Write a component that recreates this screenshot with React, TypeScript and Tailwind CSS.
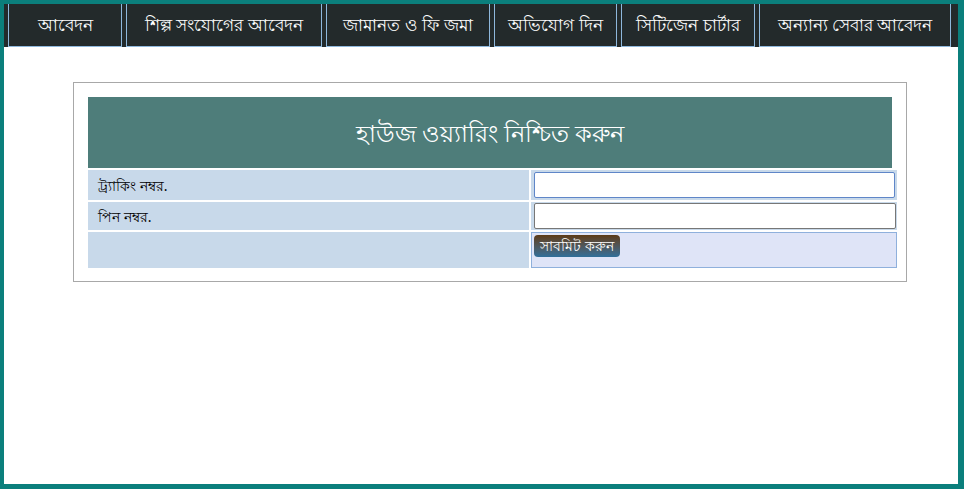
export default function App() {
  const nav = [
    ["আবেদন", "w-[114px]"],
    ["শিল্প সংযোগের আবেদন", "w-[196px]"],
    ["জামানত ও ফি জমা", "w-[164px]"],
    ["অভিযোগ দিন", "w-[123px]"],
    ["সিটিজেন চার্টার", "w-[134px]"],
    ["অন্যান্য সেবার আবেদন", "w-[192px]"],
  ];
  return (
    <div className="w-[964px] h-[489px] bg-[#0b7f7c] p-[4px] pr-[6px] pb-[5px] font-['Noto_Sans_Bengali','Noto_Sans',sans-serif]">
      <div className="w-full h-full bg-white flex flex-col">
        <div className="h-[43px] bg-[#232a2b] flex gap-[4px] pl-[4px]">
          {nav.map(([t, w]) => (
            <div key={t} className={`${w} h-full border-x border-b border-[#8fb8dc] flex items-center justify-center text-white text-[17px]`}>
              {t}
            </div>
          ))}
        </div>
        <div className="ml-[69px] mt-[35px] w-[834px] h-[200px] border border-[#a8a8a8] p-[14px]">
          <div className="h-[71px] bg-[#4e7d7a] flex items-center justify-center text-white text-[24px]">
            হাউজ ওয়্যারিং নিশ্চিত করুন
          </div>
          <div className="grid grid-cols-[441px_1fr] gap-[2px] mt-[2px] text-[14px] text-black">
            <div className="h-[30px] bg-[#c8d9ea] flex items-center pl-[10px]">ট্র্যাকিং নম্বর.</div>
            <div className="h-[30px] bg-[#c8d9ea] p-[2px] pl-[3px]">
              <div className="w-full h-full bg-white border border-[#5f86c8] rounded-[2px]" />
            </div>
            <div className="h-[28px] bg-[#c8d9ea] flex items-center pl-[10px]">পিন নম্বর.</div>
            <div className="h-[28px] bg-[#c8d9ea] p-[1px] pl-[3px]">
              <div className="w-[362px] h-full bg-white border border-[#777] rounded-[2px]" />
            </div>
            <div className="h-[36px] bg-[#c8d9ea]" />
            <div className="h-[36px] bg-[#dfe4f7] border border-[#8fb0dc] p-[2px]">
              <div className="inline-block rounded-[4px] bg-gradient-to-b from-[#5c3a14] to-[#2f6f9a] text-white text-[14px] px-[6px] leading-[22px]">
                সাবমিট করুন
              </div>
            </div>
          </div>
        </div>
      </div>
    </div>
  );
}
